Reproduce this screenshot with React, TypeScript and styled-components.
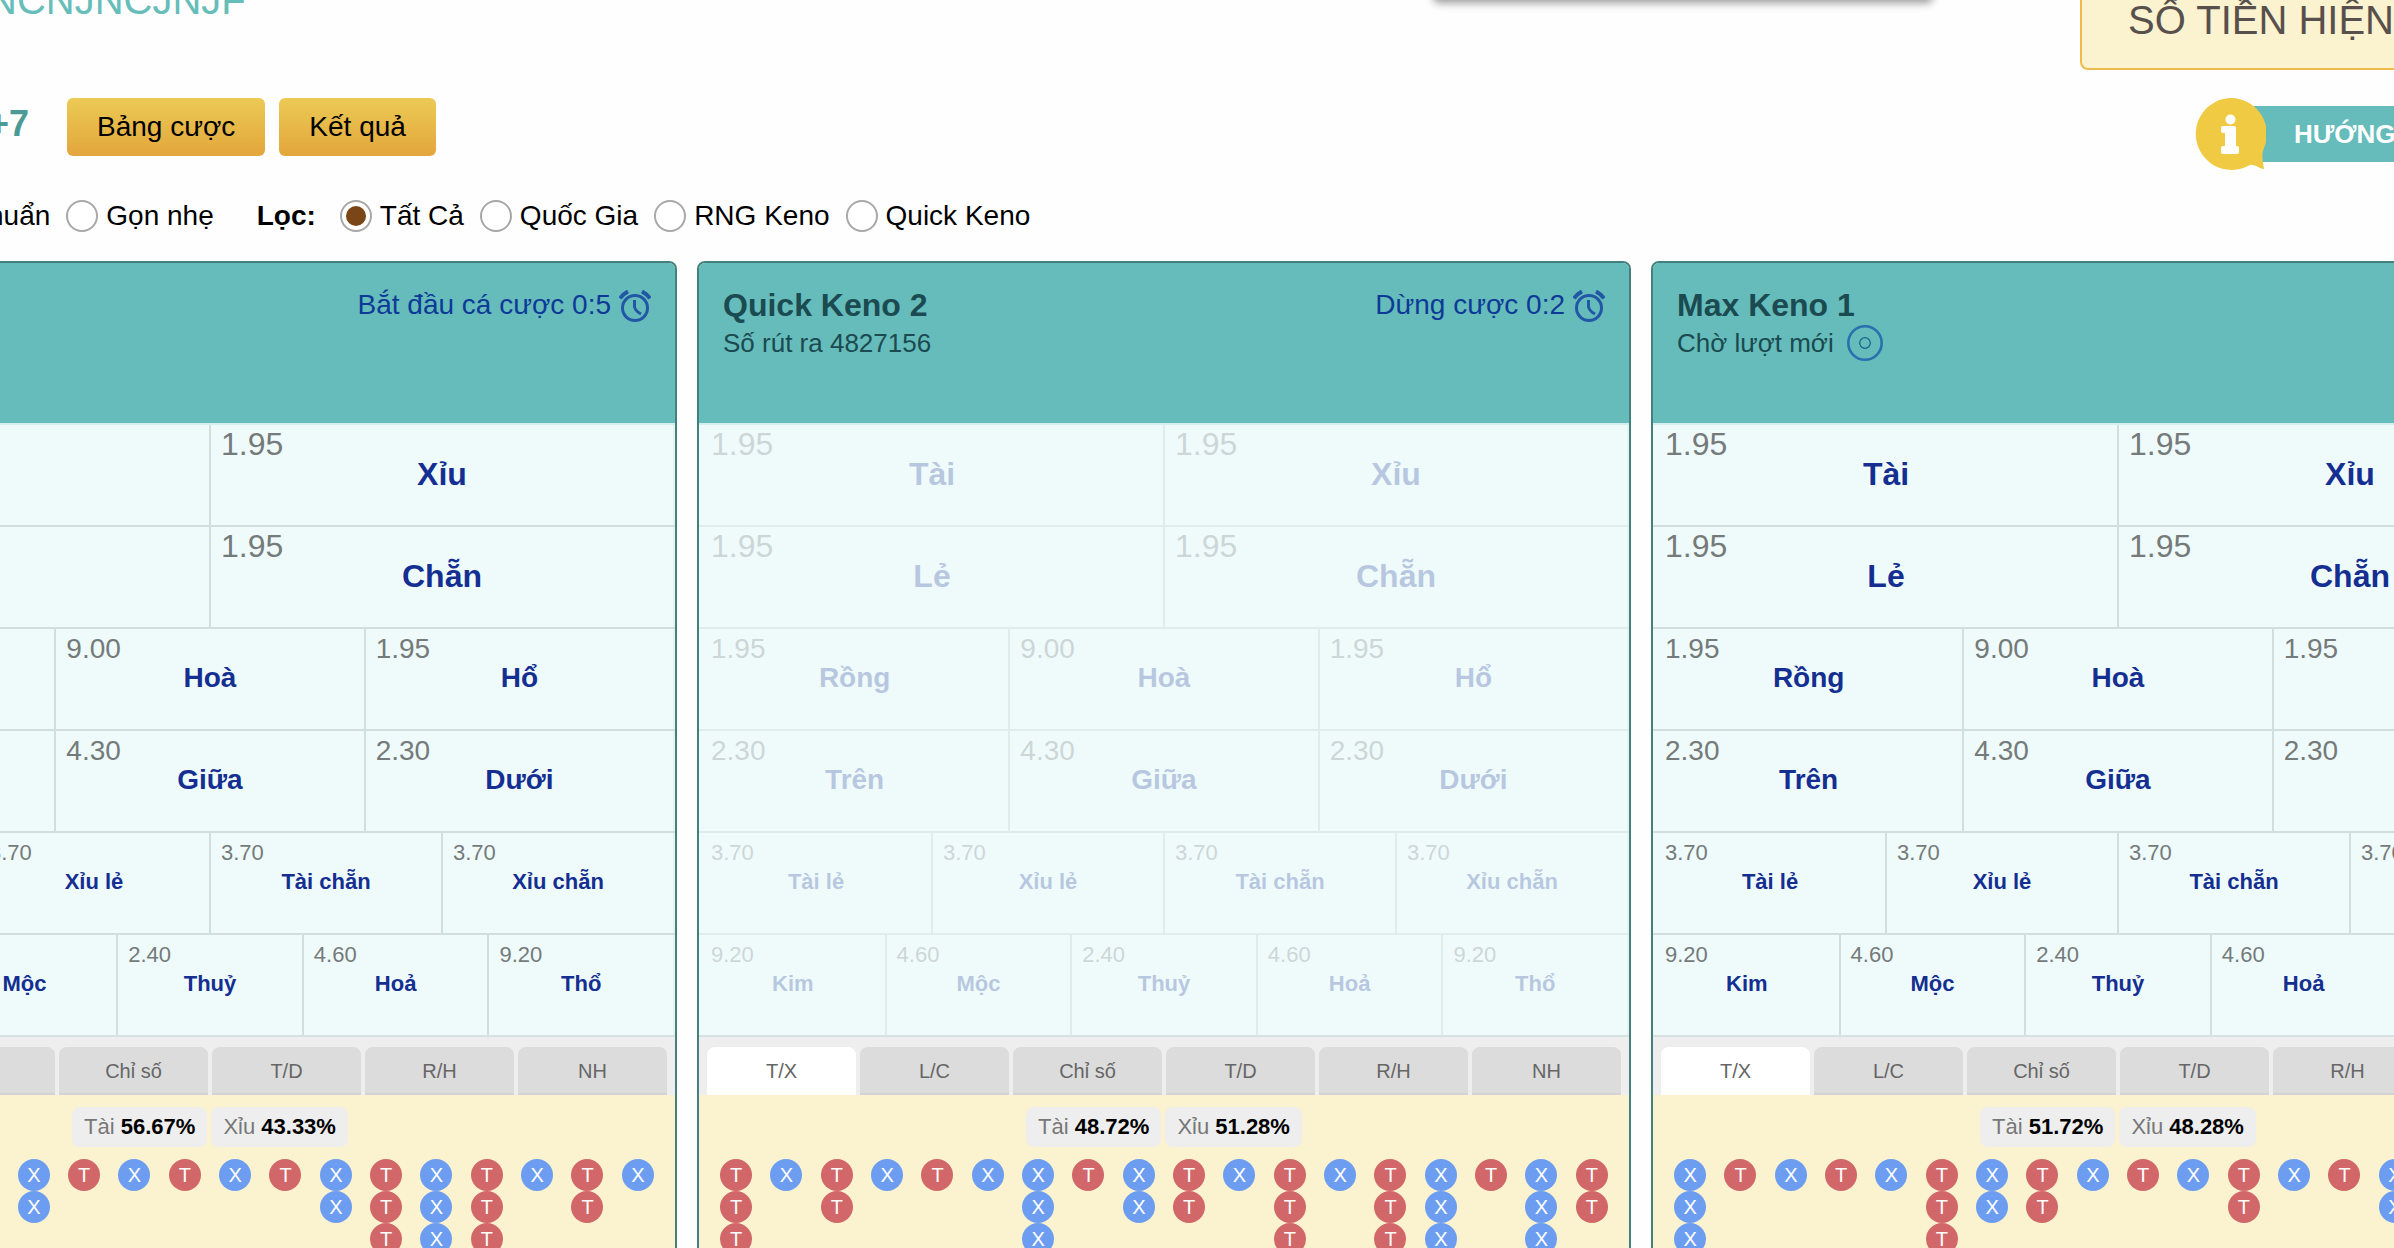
import React, { useState } from "react";
import styled, { createGlobalStyle } from "styled-components";

const GlobalStyle = createGlobalStyle`
  * { box-sizing: border-box; }
  body {
    margin: 0;
    background: #fefefe;
    color: #000;
    font-family: "Liberation Sans", Arial, sans-serif;
    font-size: 28px;
    line-height: 32px;
  }
  button { font-family: inherit; cursor: pointer; }
`;

const Page = styled.div`
  height: 100vh;
  overflow: hidden;
`;

/* ---------- top area ---------- */

const TopBar = styled.header`
  display: flex;
  align-items: flex-start;
  height: 90px;
  margin-top: -20px;
  margin-left: -12px;
`;

const Brand = styled.div`
  font-size: 40px;
  line-height: 40px;
  color: #67bdba;
`;

const Notice = styled.div`
  width: 500px;
  height: 20px;
  margin: 0 147px 0 auto;
  background: #fff;
  border-radius: 6px;
  box-shadow: 0 3px 8px rgba(0, 0, 0, 0.4);
`;

const Balance = styled.div`
  height: 90px;
  padding: 20px 0 28px 46px;
  border: 2px solid #f0bb4d;
  border-width: 0 0 2px 2px;
  border-radius: 0 0 0 8px;
  background: #fbf2cf;
  color: #57504c;
  font-size: 40px;
  line-height: 40px;
  white-space: nowrap;
`;

const Toolbar = styled.div`
  display: flex;
  justify-content: space-between;
  align-items: flex-start;
  margin: 28px 0 30px -12px;
`;

const Actions = styled.div`
  display: flex;
  align-items: baseline;
  gap: 14px;
`;

const Zone = styled.span`
  margin-right: 24px;
  color: #4b9a96;
  font-size: 36px;
  font-weight: 700;
`;

const GoldButton = styled.button`
  height: 58px;
  padding: 0 30px;
  border: 0;
  border-radius: 6px;
  background: linear-gradient(#ebca55, #e3a63c);
  color: #000;
  font-size: 28px;
`;

const Help = styled.a`
  display: flex;
  align-items: center;
  width: 200px;
  color: #fff;
  font-size: 26px;
  font-weight: 700;
  text-decoration: none;
  svg {
    position: relative;
    flex: none;
  }
`;

const HelpBar = styled.span`
  flex: 1;
  min-width: 0;
  margin-left: -36px;
  padding-left: 64px;
  overflow: hidden;
  background: #65bcbb;
  line-height: 56px;
  white-space: nowrap;
`;

/* ---------- filters ---------- */

const Filters = styled.form`
  display: flex;
  align-items: center;
  margin: 0 0 29px -12px;
  white-space: nowrap;
`;

const FilterGroup = styled.div`
  display: flex;
  align-items: center;
  gap: 16px;
  margin-right: 43px;
`;

const FilterName = styled.strong`
  margin-right: 24px;
`;

const Option = styled.label`
  display: flex;
  align-items: center;
  gap: 8px;
`;

const Radio = styled.input`
  appearance: none;
  width: 32px;
  height: 32px;
  margin: 0;
  padding: 4px;
  border: 2px solid #a8a8a8;
  border-radius: 50%;
  background: #fff;
  &:checked {
    background: #7a4517 content-box;
  }
`;

/* ---------- game cards ---------- */

const Board = styled.main`
  display: grid;
  grid-template-columns: repeat(3, minmax(0, 1fr));
  gap: 20px;
  margin: 0 -191px 0 -257px;
`;

const Card = styled.section`
  border: 2px solid #43807e;
  border-radius: 8px;
  overflow: hidden;
  background: #fbf2cf;
`;

const CardHead = styled.div`
  display: flex;
  justify-content: space-between;
  min-height: 160px;
  padding: 23px 24px 0;
  background: #65bcbb;
  color: #1b4a50;
  line-height: 38px;
`;

const Title = styled.h2`
  margin: 0;
  font-size: 32px;
`;

const Subtitle = styled.p`
  display: flex;
  align-items: center;
  gap: 13px;
  height: 38px;
  margin: 0;
  font-size: 26px;
`;

const Status = styled.div`
  display: flex;
  align-items: flex-end;
  gap: 8px;
  height: 38px;
  margin-left: auto;
  color: #0e3a97;
  svg {
    margin-bottom: 2px;
  }
`;

const Row = styled.div<{ $count: number; $off: boolean }>`
  display: grid;
  grid-template-columns: repeat(${(p) => p.$count}, minmax(0, 1fr));
  padding-right: 2px;
  border-top: 2px solid ${(p) => (p.$off ? "#dfecea" : "#d0dedd")};
  background: #e6f3f3;
  &:first-child {
    border-top-color: #d5eeef;
  }
`;

const Bets = styled.div`
  border-bottom: 2px solid #d5e2e1;
`;

const cellSize = { large: 32, medium: 28, small: 22 };
type Size = keyof typeof cellSize;

const Cell = styled.button<{ $size: Size }>`
  display: flex;
  flex-direction: column;
  align-items: flex-start;
  justify-content: flex-start;
  height: 100px;
  padding: 0 10px 0 12px;
  border: 0;
  background: #effbfb;
  font-size: ${(p) => cellSize[p.$size]}px;
  & + & {
    padding-left: 10px;
    border-left: 2px solid #d0dedd;
  }
  & + &:disabled {
    border-left-color: #dfecea;
  }
  &:disabled {
    cursor: default;
  }
`;

const Odds = styled.span`
  color: #757a7a;
  line-height: 39px;
  ${Cell}:disabled & {
    opacity: 0.28;
  }
`;

const Pick = styled.span`
  align-self: center;
  color: #142f91;
  font-weight: 700;
  line-height: 20px;
  ${Cell}:disabled & {
    opacity: 0.25;
  }
`;

const Tabs = styled.div`
  display: grid;
  grid-template-columns: repeat(6, minmax(0, 1fr));
  gap: 4px;
  padding: 10px 8px 0;
  background: #eee;
`;

const Tab = styled.button<{ $active: boolean }>`
  height: 48px;
  padding: 0;
  border: 0;
  border-radius: 8px 8px 0 0;
  background: ${(p) => (p.$active ? "#fff" : "#dcdcdc")};
  box-shadow: ${(p) => (p.$active ? "none" : "inset 0 -2px 0 #d3d3d3")};
  color: #666;
  font-size: 20px;
`;

const Shares = styled.div`
  display: flex;
  justify-content: center;
  gap: 4px;
  padding: 12px 0;
`;

const Share = styled.span`
  padding: 0 12px;
  border-radius: 8px;
  background: #eee;
  color: #777;
  font-size: 22px;
  line-height: 40px;
  b {
    color: #000;
  }
`;

const Road = styled.div`
  display: grid;
  grid-template-columns: repeat(18, minmax(0, 1fr));
  min-height: 200px;
  padding: 0 12px;
`;

const Streak = styled.div`
  display: flex;
  flex-direction: column;
  align-items: center;
`;

const Ball = styled.span<{ $red: boolean }>`
  width: 32px;
  border-radius: 50%;
  background: ${(p) => (p.$red ? "#d16769" : "#6c9df0")};
  color: #fff;
  font-size: 20px;
  line-height: 32px;
  text-align: center;
`;

/* ---------- icons ---------- */

const InfoIcon = () => (
  <svg width="72" height="72" viewBox="0 0 72 72" aria-hidden="true">
    <path d="M36 0a36 36 0 0 1 34 50c-3 7-1 14 0 21-5 0-9-5-14-4A36 36 0 1 1 36 0z" fill="#f1ca43" />
    <circle cx="36.500" cy="21.500" r="5" fill="#fff" />
    <path d="M29 28h11q2 0 2 2v18h1q2 0 2 2v4q0 2-2 2H29q-2 0-2-2v-4q0-2 2-2h2V35h-2q-2 0-2-2v-3q0-2 2-2z" fill="#fff" />
  </svg>
);

const ClockIcon = () => (
  <svg width="32" height="32" viewBox="0 0 32 32" fill="none" stroke="#2257a6" aria-hidden="true">
    <circle cx="16" cy="18" r="12.500" strokeWidth="3" />
    <path d="M1 8.500q3-4.500 8-7M31 8.500q-3-4.500-8-7" strokeWidth="4" />
    <path d="M15.500 10v7q1 4 6.500 7" strokeWidth="3" />
  </svg>
);

const TargetIcon = () => (
  <svg width="36" height="36" viewBox="0 0 36 36" fill="none" stroke="#2a6fae" aria-hidden="true">
    <circle cx="18" cy="18" r="16.700" strokeWidth="2.600" />
    <circle cx="18" cy="18" r="5.300" strokeWidth="1.200" stroke="#14628f" />
  </svg>
);

/* ---------- data ---------- */

const rows: { size: Size; cells: [string, string][] }[] = [
  { size: "large", cells: [["1.95", "Tài"], ["1.95", "Xỉu"]] },
  { size: "large", cells: [["1.95", "Lẻ"], ["1.95", "Chẵn"]] },
  { size: "medium", cells: [["1.95", "Rồng"], ["9.00", "Hoà"], ["1.95", "Hổ"]] },
  { size: "medium", cells: [["2.30", "Trên"], ["4.30", "Giữa"], ["2.30", "Dưới"]] },
  { size: "small", cells: [["3.70", "Tài lẻ"], ["3.70", "Xỉu lẻ"], ["3.70", "Tài chẵn"], ["3.70", "Xỉu chẵn"]] },
  { size: "small", cells: [["9.20", "Kim"], ["4.60", "Mộc"], ["2.40", "Thuỷ"], ["4.60", "Hoả"], ["9.20", "Thổ"]] },
];

const tabNames = ["T/X", "L/C", "Chỉ số", "T/D", "R/H", "NH"];

interface Game {
  title?: string;
  subtitle?: string;
  waiting?: boolean;
  status?: string;
  closed?: boolean;
  over: string;
  under: string;
  road: string[];
}

const games: Game[] = [
  {
    status: "Bắt đầu cá cược 0:5",
    over: "56.67%",
    under: "43.33%",
    road: ["", "", "", "", "", "XX", "T", "X", "T", "X", "T", "XX", "TTT", "XXX", "TTT", "X", "TT", "X"],
  },
  {
    title: "Quick Keno 2",
    subtitle: "Số rút ra 4827156",
    status: "Dừng cược 0:2",
    closed: true,
    over: "48.72%",
    under: "51.28%",
    road: ["TTT", "X", "TT", "X", "T", "X", "XXX", "T", "XX", "TT", "X", "TTT", "X", "TTT", "XXX", "T", "XXX", "TT"],
  },
  {
    title: "Max Keno 1",
    subtitle: "Chờ lượt mới",
    waiting: true,
    over: "51.72%",
    under: "48.28%",
    road: ["XXX", "T", "X", "T", "X", "TTT", "XX", "TT", "X", "T", "X", "TT", "X", "T", "XX"],
  },
];

const GameCard = ({ game }: { game: Game }) => {
  const [tab, setTab] = useState(0);
  const off = !!game.closed;
  return (
    <Card>
      <CardHead>
        <div>
          {game.title && <Title>{game.title}</Title>}
          {game.subtitle && (
            <Subtitle>
              {game.subtitle}
              {game.waiting && <TargetIcon />}
            </Subtitle>
          )}
        </div>
        {game.status && (
          <Status>
            {game.status}
            <ClockIcon />
          </Status>
        )}
      </CardHead>
      <Bets>
        {rows.map((row, r) => (
          <Row key={r} $count={row.cells.length} $off={off}>
            {row.cells.map(([odds, name]) => (
              <Cell key={name} type="button" $size={row.size} disabled={off}>
                <Odds>{odds}</Odds>
                <Pick>{name}</Pick>
              </Cell>
            ))}
          </Row>
        ))}
      </Bets>
      <Tabs role="tablist">
        {tabNames.map((name, i) => (
          <Tab key={name} type="button" role="tab" aria-selected={i === tab} $active={i === tab} onClick={() => setTab(i)}>
            {name}
          </Tab>
        ))}
      </Tabs>
      <Shares>
        <Share>
          Tài <b>{game.over}</b>
        </Share>
        <Share>
          Xỉu <b>{game.under}</b>
        </Share>
      </Shares>
      <Road>
        {game.road.map((streak, i) => (
          <Streak key={i}>
            {streak.split("").map((mark, j) => (
              <Ball key={j} $red={mark === "T"}>
                {mark}
              </Ball>
            ))}
          </Streak>
        ))}
      </Road>
    </Card>
  );
};

const filterNames = ["Tất Cả", "Quốc Gia", "RNG Keno", "Quick Keno"];

export default function App() {
  const [filter, setFilter] = useState(filterNames[0]);
  const [compact, setCompact] = useState(false);
  return (
    <Page>
      <GlobalStyle />
      <TopBar>
        <Brand>NCNJNCJNJF</Brand>
        <Notice />
        <Balance>SỐ TIỀN HIỆN</Balance>
      </TopBar>
      <Toolbar>
        <Actions>
          <Zone>+7</Zone>
          <GoldButton type="button">Bảng cược</GoldButton>
          <GoldButton type="button">Kết quả</GoldButton>
        </Actions>
        <Help href="#help">
          <InfoIcon />
          <HelpBar>HƯỚNG</HelpBar>
        </Help>
      </Toolbar>
      <Filters>
        <FilterGroup>
          <span>huẩn</span>
          <Option>
            <Radio type="radio" name="view" checked={compact} onChange={() => setCompact(true)} />
            Gọn nhẹ
          </Option>
        </FilterGroup>
        <FilterName>Lọc:</FilterName>
        <FilterGroup>
          {filterNames.map((name) => (
            <Option key={name}>
              <Radio type="radio" name="filter" checked={filter === name} onChange={() => setFilter(name)} />
              {name}
            </Option>
          ))}
        </FilterGroup>
      </Filters>
      <Board>
        {games.map((game, i) => (
          <GameCard key={i} game={game} />
        ))}
      </Board>
    </Page>
  );
}
